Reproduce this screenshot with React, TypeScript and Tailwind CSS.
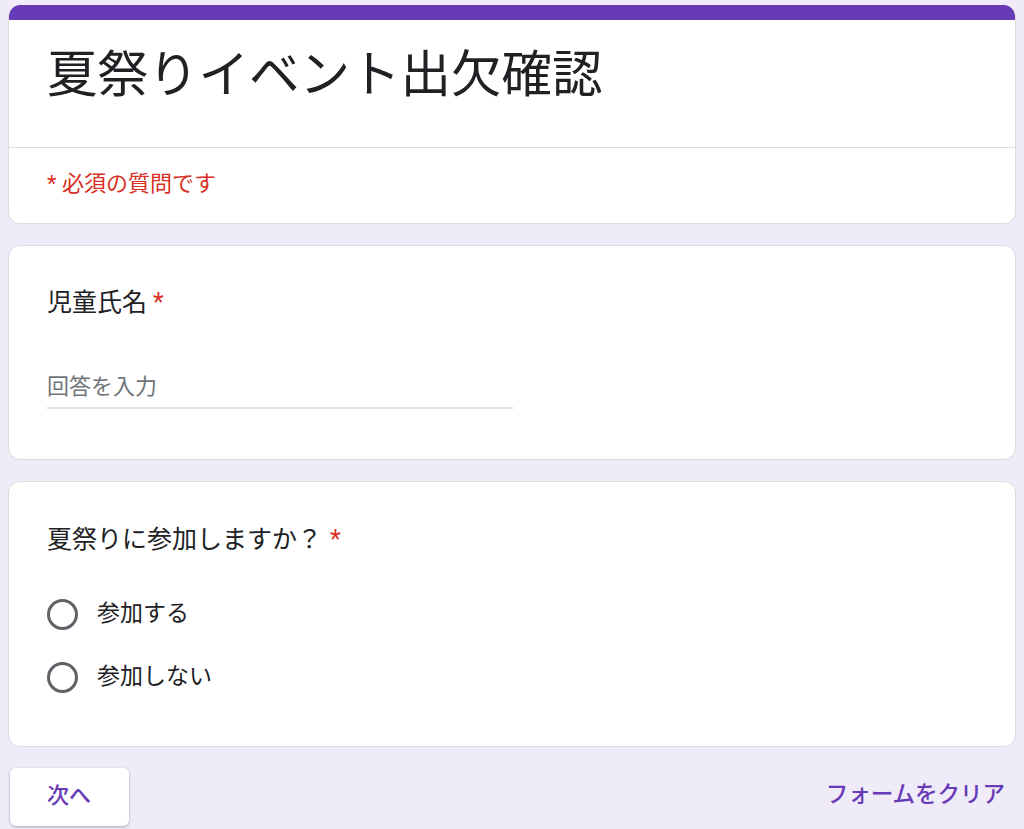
const font = { fontFamily: 'Roboto, "Noto Sans CJK JP", sans-serif' }

function Card({ children, className = '' }: { children: React.ReactNode; className?: string }) {
  return (
    <div className={`rounded-[12px] border border-[#dadce0] bg-white ${className}`}>{children}</div>
  )
}

function Radio({ label }: { label: string }) {
  return (
    <label className="flex h-[63px] items-center gap-[19px]">
      <span className="h-[31px] w-[31px] rounded-full border-[3px] border-[#5f6368]" />
      <span className="text-[23px] text-[#202124]">{label}</span>
    </label>
  )
}

export default function App() {
  return (
    <div className="min-h-[829px] bg-[#f0ebf8] px-[8px] pt-[5px]" style={font}>
      <div className="flex flex-col gap-[21px]">
        <div className="overflow-hidden rounded-[12px] border border-[#dadce0] border-t-0 bg-white">
          <div className="h-[15px] bg-[#673ab7]" />
          <div className="flex h-[128px] items-center border-b border-[#dadce0] px-[38px] pb-[16px]">
            <h1 className="text-[50.5px] leading-none font-normal text-[#202124]">夏祭りイベント出欠確認</h1>
          </div>
          <div className="flex h-[75px] items-center px-[38px] pb-[4px] text-[22px] text-[#d93025]">
            * 必須の質問です
          </div>
        </div>

        <Card className="h-[215px] px-[38px] pt-[41px]">
          <div className="flex items-center text-[25px] leading-[32px] text-[#202124]">
            児童氏名<span className="ml-[6px] text-[#d93025]">*</span>
          </div>
          <div className="mt-[54px] w-[466px] border-b-2 border-[#e0e0e0] pb-[6px] text-[22px] leading-[28px] text-[#70757a]">
            回答を入力
          </div>
        </Card>

        <Card className="h-[266px] px-[38px] pt-[42px]">
          <div className="flex items-center text-[25px] leading-[32px] text-[#202124]">
            夏祭りに参加しますか？<span className="ml-[8px] text-[#d93025]">*</span>
          </div>
          <div className="mt-[27px] flex flex-col">
            <Radio label="参加する" />
            <Radio label="参加しない" />
          </div>
        </Card>

        <div className="flex items-center justify-between pr-[11px]">
          <button className="ml-[2px] flex h-[58px] w-[119px] items-center rounded-[6px] bg-white pb-[4px] pl-[37px] text-[22px] font-medium text-[#673ab7] shadow-[0_1px_3px_rgba(0,0,0,0.3)]">
            次へ
          </button>
          <span className="pb-[4px] text-[22.5px] font-medium text-[#673ab7]">フォームをクリア</span>
        </div>
      </div>
    </div>
  )
}
